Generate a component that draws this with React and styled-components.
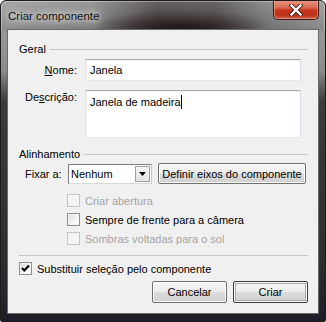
import React from "react";
import styled, { createGlobalStyle } from "styled-components";

const Global = createGlobalStyle`
  html, body {
    margin: 0;
    padding: 0;
    background: #ffffff;
  }
  * { box-sizing: border-box; }
`;

const Frame = styled.div`
  width: 326px;
  height: 322px;
  border: 1px solid #1c1c1c;
  border-radius: 6px 6px 2px 2px;
  padding: 0 6px 7px 6px;
  display: flex;
  flex-direction: column;
  font-family: "Liberation Sans", Arial, sans-serif;
  font-size: 11px;
  color: #000;
  box-shadow: inset 0 0 0 1px rgba(255, 255, 255, 0.35);
  background:
    linear-gradient(180deg, rgba(255,255,255,0.22) 0, rgba(255,255,255,0.05) 24px, rgba(0,0,0,0) 30px),
    radial-gradient(ellipse 90px 16px at 180px 25px, rgba(25,12,12,0.95), rgba(25,12,12,0)),
    linear-gradient(90deg, #8e8e8e 0, #7c7c7c 28%, #3a3333 48%, #403a3a 66%, #6e6e6e 82%, #8a8a8a 100%),
    #555;
  background-repeat: no-repeat;
  background-size: 100% 30px, 100% 30px, 100% 30px, 100% 100%;
  position: relative;
  overflow: hidden;

  &::before {
    content: "";
    position: absolute;
    left: 0;
    right: 0;
    top: 30px;
    bottom: 0;
    background: linear-gradient(180deg, #9a9a9a 0, #8a8a8a 40px, #3c3c3c 70px, #2e2e30 80%, #1e1e28 100%);
    z-index: 0;
  }
`;

const TitleBar = styled.div`
  height: 28px;
  display: flex;
  align-items: flex-start;
  justify-content: space-between;
  position: relative;
  z-index: 1;
`;

const Title = styled.span`
  font-size: 11.5px;
  margin-top: 9px;
  margin-left: 1px;
  color: #111;
  text-shadow: 0 0 6px rgba(255,255,255,0.9), 0 0 10px rgba(255,255,255,0.7), 0 0 14px rgba(255,255,255,0.5);
`;

const CloseButton = styled.div`
  width: 46px;
  height: 20px;
  margin-top: -1px;
  border: 1px solid #3a1a14;
  border-top: none;
  border-radius: 0 0 5px 5px;
  background: linear-gradient(180deg, #e89a86 0, #d86a52 40%, #c4341a 55%, #b8341c 80%, #d0644c 100%);
  box-shadow: inset 0 0 0 1px rgba(255, 200, 180, 0.45);
  display: flex;
  align-items: center;
  justify-content: center;
`;

const Client = styled.div`
  flex: 1;
  position: relative;
  z-index: 1;
  background: #f0f0f0;
  border: 1px solid #6a6a6a;
  padding: 11px 10px 0 11px;
  display: flex;
  flex-direction: column;
`;

const SectionHeader = styled.div`
  display: flex;
  align-items: center;
  gap: 4px;
  height: 15px;
  margin-top: ${(p) => p.$top || 0}px;
  &::after {
    content: "";
    flex: 1;
    height: 1px;
    background: #c6c6c6;
    margin-top: 2px;
  }
`;

const FieldRow = styled.div`
  display: flex;
  align-items: ${(p) => (p.$top ? "flex-start" : "center")};
  gap: 8px;
  margin-top: ${(p) => p.$mt}px;
`;

const FieldLabel = styled.label`
  width: 58px;
  text-align: right;
  line-height: 15px;
`;

const Key = styled.span`
  text-decoration: underline;
`;

const TextBox = styled.div`
  width: 216px;
  height: ${(p) => p.$h}px;
  background: #fff;
  border: 1px solid #abadb3;
  border-color: #abadb3 #dbdfe6 #e3e9ef #e2e3ea;
  box-shadow: inset 1px 1px 0 #f0f0f0;
  padding: ${(p) => (p.$multi ? "4px 4px" : "3px 4px")};
  line-height: 14px;
`;

const Caret = styled.span`
  display: inline-block;
  width: 1px;
  height: 14px;
  background: #000;
  vertical-align: top;
`;

const AlignRow = styled.div`
  display: flex;
  align-items: center;
  padding-left: 6px;
  margin-top: 2px;
  height: 21px;
`;

const AlignLabel = styled.span`
  width: 37px;
  margin-right: 6px;
`;

const Select = styled.div`
  width: 84px;
  height: 20px;
  background: #fff;
  border: 1px solid #828790;
  border-color: #7a7a7a #c8c8c8 #d8d8d8 #7a7a7a;
  display: flex;
  align-items: center;
  justify-content: space-between;
  padding: 0 1px 0 2px;
  margin-right: 6px;
`;

const SelectArrow = styled.div`
  width: 15px;
  height: 16px;
  border: 1px solid #a0a0a0;
  background: linear-gradient(180deg, #f6f6f6, #e2e2e2);
  display: flex;
  align-items: center;
  justify-content: center;
`;

const Button = styled.button`
  width: ${(p) => p.$w}px;
  height: ${(p) => p.$h || 22}px;
  font-family: inherit;
  font-size: 11px;
  color: #000;
  padding: 0;
  border: 1px solid ${(p) => (p.$primary ? "#3c3c3c" : "#707070")};
  border-radius: 2px;
  background: linear-gradient(180deg, #f6f6f6 0, #ececec 50%, #dcdcdc 51%, #d0d0d0 100%);
  box-shadow: inset 0 0 0 1px #fbfbfb
    ${(p) => (p.$primary ? ", inset 0 0 0 2px #a8a8a8" : "")};
`;

const CheckList = styled.div`
  display: flex;
  flex-direction: column;
  padding-left: 48px;
  margin-top: ${(p) => p.$mt || 0}px;
`;

const CheckRow = styled.div`
  display: flex;
  align-items: center;
  height: 19px;
  gap: 5px;
  color: ${(p) => (p.$disabled ? "#a3a3a3" : "#000")};
  margin-top: ${(p) => p.$mt || 0}px;
`;

const Box = styled.span`
  width: 13px;
  height: 13px;
  border: 1px solid ${(p) => (p.$disabled ? "#c4c4c4" : "#8e8f8f")};
  background: ${(p) =>
    p.$disabled ? "#f4f4f4" : "linear-gradient(135deg, #dcdcdc 0, #f4f4f4 60%, #ffffff 100%)"};
  box-shadow: inset 0 0 0 1px #f4f4f4;
  display: flex;
  align-items: center;
  justify-content: center;
`;

const Separator = styled.div`
  height: 1px;
  background: #c6c6c6;
  margin-top: 7px;
`;

const ButtonRow = styled.div`
  display: flex;
  justify-content: flex-end;
  gap: 6px;
  margin-top: 3px;
`;

const Check = ({ checked, disabled, children, mt }) => (
  <CheckRow $disabled={disabled} $mt={mt}>
    <Box $disabled={disabled}>
      {checked && (
        <svg width="9" height="9" viewBox="0 0 9 9">
          <path d="M1 4 L3.3 6.5 L8 1.5" fill="none" stroke="#000" strokeWidth="2.2" />
        </svg>
      )}
    </Box>
    <span>{children}</span>
  </CheckRow>
);

export default function App() {
  return (
    <>
      <Global />
      <Frame>
        <TitleBar>
          <Title>Criar componente</Title>
          <CloseButton>
            <svg width="14" height="12" viewBox="0 0 14 12">
              <path d="M2.5 1.5 L11.5 10.5 M11.5 1.5 L2.5 10.5" stroke="#4a1a12" strokeWidth="4.2" strokeLinecap="square" />
              <path d="M2.5 1.5 L11.5 10.5 M11.5 1.5 L2.5 10.5" stroke="#ffffff" strokeWidth="2.4" strokeLinecap="square" />
            </svg>
          </CloseButton>
        </TitleBar>
        <Client>
          <SectionHeader>Geral</SectionHeader>
          <FieldRow $mt={3}>
            <FieldLabel>
              <Key>N</Key>ome:
            </FieldLabel>
            <TextBox $h={22}>Janela</TextBox>
          </FieldRow>
          <FieldRow $mt={9} $top>
            <FieldLabel>
              De<Key>s</Key>crição:
            </FieldLabel>
            <TextBox $h={48} $multi>
              Janela de madeira<Caret />
            </TextBox>
          </FieldRow>

          <SectionHeader $top={8}>Alinhamento</SectionHeader>
          <AlignRow>
            <AlignLabel>Fixar a:</AlignLabel>
            <Select>
              <span>Nenhum</span>
              <SelectArrow>
                <svg width="7" height="4" viewBox="0 0 7 4">
                  <path d="M0 0 H7 L3.5 4 Z" fill="#000" />
                </svg>
              </SelectArrow>
            </Select>
            <Button $w={148} $h={21}>Definir eixos do componente</Button>
          </AlignRow>
          <CheckList $mt={7}>
            <Check disabled>Criar abertura</Check>
            <Check>Sempre de frente para a câmera</Check>
            <Check disabled>Sombras voltadas para o sol</Check>
          </CheckList>

          <Separator />
          <Check checked mt={3}>Substituir seleção pelo componente</Check>
          <ButtonRow>
            <Button $w={75}>Cancelar</Button>
            <Button $w={75} $primary>Criar</Button>
          </ButtonRow>
        </Client>
      </Frame>
    </>
  );
}
